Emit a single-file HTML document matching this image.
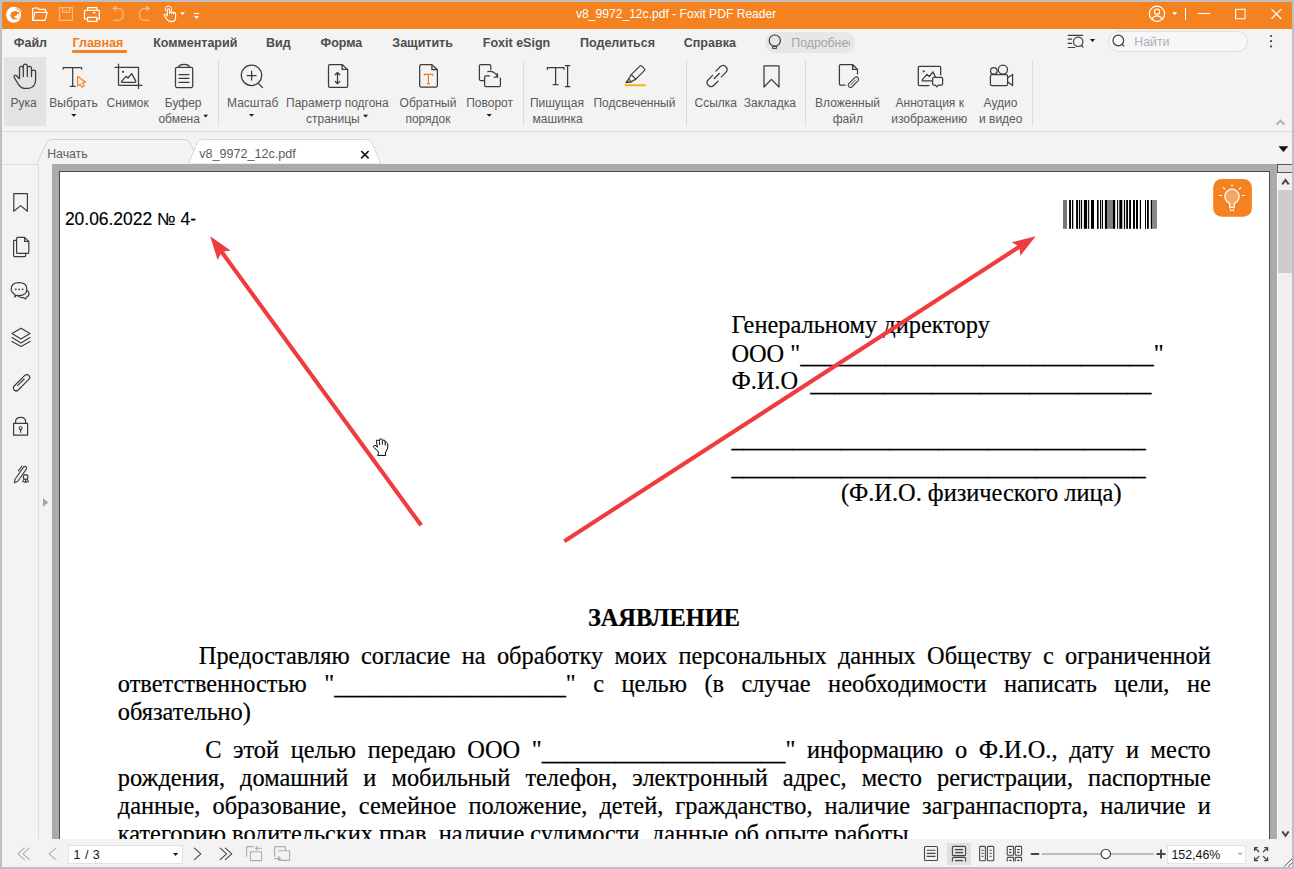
<!DOCTYPE html>
<html><head><meta charset="utf-8">
<style>
*{margin:0;padding:0;box-sizing:border-box}
html,body{width:1294px;height:869px;overflow:hidden;background:#bfbfbf;font-family:"Liberation Sans",sans-serif}
.a{position:absolute}
#title{left:2px;top:2px;width:1290px;height:27px;background:#f48221}
#menu{left:2px;top:29px;width:1290px;height:102px;background:#f3f3f3}
#ribline{left:2px;top:131px;width:1290px;height:1px;background:#dddddd}
#tabbar{left:2px;top:132px;width:1290px;height:32px;background:#f3f3f3}
#side{left:2px;top:164px;width:50px;height:675px;background:#f3f3f3}
#sideline{left:38px;top:164px;width:1px;height:675px;background:#dedede}
#docbg{left:52px;top:164px;width:1225px;height:675px;background:#ababab;overflow:hidden}
#page{left:7px;top:7px;width:1211px;height:700px;background:#fff;border:1px solid #4a4a4a;border-right-width:1px}
#vscroll{left:1277px;top:164px;width:15px;height:675px;background:#f0f0f0}
#status{left:2px;top:839px;width:1290px;height:28px;background:#f3f3f3}
.t{position:absolute;white-space:nowrap;line-height:1}
.mn{font-size:12.5px;font-weight:bold;color:#4d4d4d;top:37px}
.rb{font-size:12px;color:#5a5a5a;text-align:center}
.jl{white-space:normal;text-align:justify;text-align-last:justify}
.us{position:relative;top:1.8px}
.pdf{font-family:"Liberation Serif",serif;font-size:24.39px;color:#000;-webkit-text-stroke:0.2px #000}
</style></head><body>
<div id="title" class="a"></div>
<!-- TITLE -->
<svg class="a" style="left:0;top:0" width="1294" height="30" viewBox="0 0 1294 30">
<g fill="none" stroke="#fff" stroke-width="1.2" stroke-linejoin="round" stroke-linecap="round">
<!-- folder -->
<path d="M32.6 19.8 V9.2 Q32.6 8 33.8 8 H37.6 L39 9.4 H44.6 Q45.6 9.4 45.6 10.4 V12"/>
<path d="M32.8 20.3 L35 12.3 H47.2 L45 20.3 Z"/>
<!-- save (faded) -->
<g opacity="0.45"><path d="M59.6 7.6 H72.4 V20.4 H59.6 Z"/><path d="M62.6 7.6 V12.3 H69.6 V7.6"/><path d="M65.5 10.3 H66.8"/></g>
<!-- printer -->
<path d="M87.6 10.2 V7.6 H96.9 V10.2"/>
<path d="M87.4 19.2 H85.2 Q84.5 19.2 84.5 18.5 V11 Q84.5 10.3 85.2 10.3 H98.6 Q99.3 10.3 99.3 11 V18.5 Q99.3 19.2 98.6 19.2 H96.9"/>
<path d="M87.6 17.4 H96.9 V21.4 H87.6 Z"/>
<path d="M93.3 12.6 H95" stroke-width="1.3"/>
<!-- undo/redo faded -->
<g opacity="0.45">
<path d="M113.2 8.4 L116.3 6.6 M113.2 8.4 L116 10.5 M113.4 8.4 H117.5 Q123.2 8.5 123.2 14.4 Q123.2 20.4 117.2 20.4 H113.5"/>
<path d="M149.4 8.4 L146.3 6.6 M149.4 8.4 L146.6 10.5 M149.2 8.4 H145.1 Q139.4 8.5 139.4 14.4 Q139.4 20.4 145.4 20.4 H149.1"/>
</g>
<!-- touch hand -->
<path d="M167.3 15.6 V9.8 Q167.3 8.7 168.45 8.7 Q169.6 8.7 169.6 9.8 V13.2 M169.6 12.8 Q169.7 11.9 170.6 11.9 Q171.5 11.9 171.6 12.8 V13.6 M171.6 13 Q171.7 12.2 172.6 12.2 Q173.5 12.2 173.6 13.1 V13.8 M173.6 13.4 Q173.7 12.6 174.6 12.6 Q175.6 12.6 175.6 13.6 V18 Q175.6 21.6 171.2 21.6 Q168.4 21.6 166.8 19.4 L164.4 15.9 Q163.8 14.9 164.6 14.4 Q165.4 13.9 166.2 14.7 L167.3 15.8" stroke-width="1.1"/>
<path d="M165.3 10.6 Q165.1 6 168.45 6 Q171.8 6 171.6 10.6" stroke-width="1"/>
<!-- title right -->
<circle cx="1157" cy="13.8" r="7.6"/>
<circle cx="1157" cy="11.8" r="2.6"/>
<path d="M1152.1 19.4 Q1153.2 15.8 1157 15.8 Q1160.8 15.8 1161.9 19.4"/>
<path d="M1185.5 8.3 V19.6" stroke-width="1"/>
<path d="M1198 13.5 H1209.8" stroke-width="1.1"/>
<path d="M1235.6 9.3 H1245 V18.7 H1235.6 Z" stroke-width="1.1"/>
<path d="M1271.8 9.3 L1281 18.5 M1281 9.3 L1271.8 18.5" stroke-width="1.1"/>
</g>
<g fill="#fff">
<path d="M180 12.2 H185 L182.5 15 Z"/>
<path d="M1172 12.2 H1177.4 L1174.7 14.9 Z"/>
<rect x="194" y="12.9" width="5" height="1.2"/>
<path d="M194 15.9 H199 L196.5 19 Z"/>
<!-- foxit logo -->
<ellipse cx="13.6" cy="14.8" rx="7.5" ry="7.95"/>
<path d="M17.5 7.6 Q21.2 9.2 22 13 Q20.6 10.8 17.5 7.6 Z"/>
</g>
<ellipse cx="15.1" cy="15.3" rx="4.6" ry="4.3" fill="#f48221"/>
<path d="M19.7 13.4 L18.3 14.5 L17.4 13.6 L16.9 15.5 Q15.4 16.3 13.8 16.4 Q14.9 18.6 17.4 18.4 Q19.9 17.6 19.7 13.4 Z" fill="#fff"/>
<path d="M15.6 8.5 Q19.6 9.2 21.8 12.9" fill="none" stroke="#f48221" stroke-width="0.8"/>
</svg>
<div class="t" style="left:576px;top:8px;font-size:12.1px;color:#fff">v8_9972_12c.pdf - Foxit PDF Reader</div>
<!-- /TITLE -->
<div id="menu" class="a"></div>
<div id="ribline" class="a"></div>
<!-- RIBBON -->
<div class="a" style="left:4px;top:57px;width:42px;height:69px;background:#e3e3e3"></div>
<svg class="a" style="left:0;top:29px" width="1294" height="103" viewBox="0 29 1294 103">
<g fill="none" stroke="#3b3b3b" stroke-width="1.25" stroke-linejoin="round" stroke-linecap="round">
<!-- hand -->
<path d="M19.3 78.6 L16.6 75.8 Q15 74.6 14.2 76 Q13.8 76.9 14.5 78 L18.8 84.8 Q21 88.2 24.4 88.4 H28.2 Q32.4 88.2 34.4 84.8 Q35.6 82.6 35.6 79.6 V71.8 Q35.6 70 33.6 70 Q31.6 70 31.5 71.8 V76.6 M31.5 76.6 V68.2 Q31.5 66.3 29.4 66.3 Q27.4 66.3 27.3 68.2 V76.4 M27.3 76.4 V66.2 Q27.3 64.2 25.3 64.2 Q23.3 64.2 23.3 66.2 V76.4 M23.3 76.6 V68.2 Q23.3 66.3 21.4 66.3 Q19.5 66.3 19.5 68.2 V78.6"/>
<!-- T select -->
<path d="M63.2 69.1 V67.7 H81.6 V69.1 M72.7 67.7 V86.3 M70.2 86.3 H75.1"/>
<!-- snapshot -->
<path d="M115 67.3 H138.5 V88.4 M118.5 64 V84.4 Q118.5 85.4 119.5 85.4 H141.8"/>
<path d="M121.6 81.4 L126 76.3 L128 78 L131.6 73.6 L135.6 80.6 Q136 82.3 134.6 82.3 H122.4 Q120.9 82.3 121.6 81.4 Z"/>
<!-- clipboard -->
<path d="M177 67.3 H191.2 Q192.7 67.3 192.7 68.8 V86 Q192.7 87.5 191.2 87.5 H177 Q175.5 87.5 175.5 86 V68.8 Q175.5 67.3 177 67.3 Z"/>
<path d="M178.4 67.3 Q179.2 64.3 184.1 64.3 Q189 64.3 189.8 67.3"/>
<path d="M179 74.5 H188.9 M179 78.4 H188.9 M179 82.4 H188.9"/>
<!-- zoom -->
<circle cx="251.5" cy="75.3" r="10.2"/>
<path d="M247.1 75.5 H256.1 M251.6 71.1 V80 M258.8 83.7 L262.6 87.6"/>
<!-- fit page -->
<path d="M342.1 64.5 H329.9 Q328.5 64.5 328.5 65.9 V86 Q328.5 87.4 329.9 87.4 H346.3 Q347.7 87.4 347.7 86 V69.6 Z M342.1 64.5 V69.4 H347.7"/>
<path d="M337.5 72.6 V83.6 M335.2 74.8 L337.5 72.5 L339.8 74.8 M335.2 81.4 L337.5 83.7 L339.8 81.4"/>
<!-- reverse doc -->
<path d="M431.9 64.6 H421.1 Q419.7 64.6 419.7 66 V85.6 Q419.7 87 421.1 87 H436 Q437.4 87 437.4 85.6 V69.7 Z M431.9 64.6 V69.6 H437.4"/>
<!-- rotate -->
<path d="M484.2 80.5 H480.6 Q479.4 80.5 479.4 79.3 V65.8 Q479.4 64.6 480.6 64.6 H489.6 Q490.8 64.6 490.8 65.8 V69.7"/>
<path d="M489.6 75.8 H485.8 Q484.6 75.8 484.6 77 V85.5 Q484.6 86.7 485.8 86.7 H499.2 Q500.4 86.7 500.4 85.5 V78.2"/>
<path d="M487.8 71.6 Q494.6 70.6 497.6 76.8 M497.7 77 L497.3 73.6 M497.7 77 L494.2 77.2"/>
<!-- typewriter -->
<path d="M547.4 69.3 V67.7 H564 V69.3 M555.6 67.7 V84.7 M553.2 84.7 H558 M567.6 65.5 V86.5 M565.3 65.5 H569.9 M565.3 86.5 H569.9"/>
<!-- highlighter -->
<path d="M631.3 74.6 L639.8 66.1 Q640.8 65.1 641.8 66.1 L644.3 68.6 Q645.3 69.6 644.3 70.6 L635.8 79.1 Z"/>
<path d="M631.3 74.6 L628.6 79 L631.4 81.8 L635.8 79.1"/>
<path d="M628.6 79 L626 82.6 L631.4 81.8" fill="#e0a020"/>
<!-- link -->
<path d="M715.9 71.1 L720.2 66.8 Q723 64 725.8 66.8 Q728.6 69.6 725.8 72.4 L721.3 76.9"/>
<path d="M712.6 75.4 L708.3 79.7 Q705.5 82.5 708.3 85.3 Q711.1 88.1 713.9 85.3 L718 81.2"/>
<path d="M714.3 78.5 L719.3 73.5"/>
<!-- bookmark -->
<path d="M764 65.8 H779 V87 L771.4 79.4 L764 87 Z"/>
<!-- attachment doc -->
<path d="M845 85.2 H840.6 Q839.4 85.2 839.4 84 V65.7 Q839.4 64.5 840.6 64.5 H852.6 L857.5 69.4 V73.9 M852.6 64.5 V69.4 H857.5"/>
<path d="M848.6 83.8 L855 77.4 A2.3 2.3 0 0 1 858.2 80.6 L851.8 87 A2.3 2.3 0 0 1 848.6 83.8 Z" stroke-width="1.1"/>
<path d="M850.8 84.8 L856 79.6" stroke-width="0.9"/>
<!-- image annotation -->
<path d="M929 85.5 H919.5 Q918.3 85.5 918.3 84.3 V67.5 Q918.3 66.3 919.5 66.3 H939.5 Q940.7 66.3 940.7 67.5 V74.8"/>
<path d="M931.8 80.9 H923.3 Q921.6 80.9 922.4 79.6 L927 74.4 L929.4 76.5 L932.9 71.9 L935.3 76.6"/>
<path d="M933.8 77.4 H941.4 Q942.6 77.4 942.6 78.6 V84 Q942.6 85.2 941.4 85.2 H938.2 L936.8 86.8 L935.4 85.2 H933.8 Q932.6 85.2 932.6 84 V78.6 Q932.6 77.4 933.8 77.4 Z"/>
<!-- camera -->
<path d="M992 74.6 H1006 Q1007.6 74.6 1007.6 76.2 V83.9 Q1007.6 85.5 1006 85.5 H992 Q990.4 85.5 990.4 83.9 V76.2 Q990.4 74.6 992 74.6 Z"/>
<circle cx="993.8" cy="70.8" r="3.3"/>
<circle cx="1002.9" cy="69.6" r="4.6"/>
<path d="M1007.6 77.8 L1012.6 74.4 V85.5 L1007.6 82"/>
</g>
<g fill="#3b3b3b">
<circle cx="122.9" cy="71.8" r="1.1"/>
<circle cx="923.7" cy="71.3" r="1.1"/>
</g>
<!-- orange bits -->
<path d="M77.5 76.3 L85.8 82.2 L82.6 82.8 L84.3 85.7 L82 87.3 L80.2 84.3 L77.5 86 Z" fill="#fde9dc" stroke="#f4822a" stroke-width="1.1" stroke-linejoin="round"/>
<path d="M424.3 75.8 V74.3 H432.6 V75.8 M428.4 74.3 V83.6 M426.9 83.6 H430" fill="none" stroke="#f07b1e" stroke-width="1.2"/>
<path d="M625.6 85.3 H644.8" stroke="#f7b21b" stroke-width="2.1" stroke-linecap="round"/>
<!-- dropdown arrows -->
<g fill="#1a1a1a">
<path d="M71.2 114 H76.4 L73.8 116.8 Z"/>
<path d="M203.3 114.8 H208.1 L205.7 117.5 Z"/>
<path d="M249.1 114 H254 L251.5 116.8 Z"/>
<path d="M363 114.8 H368.2 L365.6 117.5 Z"/>
<path d="M486.6 114 H491.9 L489.2 116.8 Z"/>
</g>
<!-- separators -->
<g fill="#dcdcdc">
<rect x="218" y="60" width="1" height="66"/>
<rect x="523" y="60" width="1" height="66"/>
<rect x="686" y="60" width="1" height="66"/>
<rect x="805" y="60" width="1" height="66"/>
<rect x="1032" y="60" width="1" height="66"/>
</g>
<path d="M1276.6 124.6 L1280.5 120.4 L1284.4 124.6" fill="none" stroke="#a8a8a8" stroke-width="1.6"/>
</svg>
<!-- ribbon labels -->
<div class="t rb" style="left:10.6px;top:97px">Рука</div>
<div class="t rb" style="left:49.3px;top:97px">Выбрать</div>
<div class="t rb" style="left:106.6px;top:97px">Снимок</div>
<div class="t rb" style="left:164.8px;top:97px">Буфер</div>
<div class="t rb" style="left:158.4px;top:113px">обмена</div>
<div class="t rb" style="left:227px;top:97px">Масштаб</div>
<div class="t rb" style="left:286.0px;top:97px">Параметр подгона</div>
<div class="t rb" style="left:306px;top:113px">страницы</div>
<div class="t rb" style="left:399.6px;top:97px">Обратный</div>
<div class="t rb" style="left:405.4px;top:113px">порядок</div>
<div class="t rb" style="left:466.2px;top:97px">Поворот</div>
<div class="t rb" style="left:529.9px;top:97px">Пишущая</div>
<div class="t rb" style="left:532.6px;top:113px">машинка</div>
<div class="t rb" style="left:593.4px;top:97px">Подсвеченный</div>
<div class="t rb" style="left:694.5px;top:97px">Ссылка</div>
<div class="t rb" style="left:743.8px;top:97px">Закладка</div>
<div class="t rb" style="left:815.1px;top:97px">Вложенный</div>
<div class="t rb" style="left:832.7px;top:113px">файл</div>
<div class="t rb" style="left:895.6px;top:97px">Аннотация к</div>
<div class="t rb" style="left:891.2px;top:113px">изображению</div>
<div class="t rb" style="left:983.6px;top:97px">Аудио</div>
<div class="t rb" style="left:979.0px;top:113px">и видео</div>
<!-- /RIBBON -->
<div id="tabbar" class="a"></div>
<!-- TABS -->
<svg class="a" style="left:0;top:132px" width="1294" height="32" viewBox="0 132 1294 32">
<path d="M37 163.5 L46.7 142.6 Q48.5 139.5 52.5 139.5 H184.2 Q188.2 139.5 190 143 L195 153" fill="#f3f3f3" stroke="#d2d2d2" stroke-width="1"/>
<path d="M188.4 164 L197 143.2 Q198.8 139.5 202.8 139.5 H366.4 Q370.4 139.5 372.2 143.2 L380.8 164 Z" fill="#ffffff" stroke="#d6d6d6" stroke-width="1"/>
<path d="M361.2 151 L368.6 158.4 M368.6 151 L361.2 158.4" stroke="#111" stroke-width="1.6"/>
<path d="M1278.5 146.2 H1288.3 L1283.4 152.1 Z" fill="#111"/>
</svg>
<div class="t" style="left:47.2px;top:147.6px;font-size:12.3px;color:#5c5c5c">Начать</div>
<div class="t" style="left:199.2px;top:147.5px;font-size:12.6px;color:#5c5c5c">v8_9972_12c.pdf</div>
<!-- /TABS -->
<div id="side" class="a"></div>
<div id="sideline" class="a"></div>
<!-- SIDE -->
<div class="a" style="left:2px;top:164px;width:36px;height:1px;background:#e0e0e0"></div>
<svg class="a" style="left:0;top:164px" width="52" height="675" viewBox="0 164 52 675">
<g fill="none" stroke="#3d3d3d" stroke-width="1.2" stroke-linejoin="round" stroke-linecap="round">
<path d="M13.8 193.6 H27.4 V211.2 L20.6 205.6 L13.8 211.2 Z"/>
<path d="M24.6 237.4 H17.6 Q16.6 237.4 16.6 238.4 V252.4 Q16.6 253.4 17.6 253.4 H27.8 Q28.8 253.4 28.8 252.4 V241.4 Z M24.6 237.4 V241.4 H28.8"/>
<path d="M16.6 240.4 H14.4 Q13.6 240.4 13.6 241.2 V255.8 Q13.6 256.6 14.4 256.6 H24.8 Q25.6 256.6 25.6 255.8 V253.4"/>
<path d="M15 294.6 Q11.2 292.6 11.2 289.1 Q11.2 282.6 19 282.6 Q26.8 282.6 26.8 289.1 Q26.8 295.6 19 295.6 Q17.6 295.6 16.6 295.3 L14.8 297 Z"/>
<path d="M27 290.6 Q29 291.8 29 293.8 Q29 296.2 26.4 297.2 L25.6 299 L23.4 297.6 Q20 297.8 18.2 296.4"/>
<path d="M12 333.6 L21 328.2 L30 333.6 L21 339 Z"/>
<path d="M12 337.6 L21 343 L30 337.6 M12 341.4 L21 346.4 L30 341.4"/>
<path d="M14.2 386 L24.8 375.4 A2.8 2.8 0 0 1 28.8 379.4 L18.2 390 A2.8 2.8 0 0 1 14.2 386 Z"/>
<path d="M17.6 385.6 L24.2 379" stroke-width="1.1"/>
<path d="M15.6 423.4 V421.6 Q15.6 417.4 20.6 417.4 Q25.6 417.4 25.6 421.6 V423.4"/>
<path d="M13.6 423.4 H27.6 V435.2 H13.6 Z"/>
<path d="M20.6 429.6 V432.2"/>
<circle cx="20.6" cy="428.2" r="1.4" stroke-width="1.1"/>
<path d="M14.4 482.8 L15 479.2 L23.2 467.6 Q24.6 465.8 26 466.8 Q27.3 467.8 26 469.6 L17.8 481.2 Z" stroke-width="1.1"/>
<path d="M18.4 470.8 L22 466" stroke-width="1.1"/>
<circle cx="25.6" cy="477" r="2.4" stroke-width="1.1"/>
<path d="M23.9 479 L22.6 481.9 L24.2 481.5 L25 482.8 L25.7 479.6 M27.3 479 L28.6 481.9 L27 481.5 L26.2 482.8 L25.5 479.6" stroke-width="1"/>
</g>
<g fill="#3d3d3d"><circle cx="15.8" cy="289.3" r="0.9"/><circle cx="19.2" cy="289.3" r="0.9"/><circle cx="22.6" cy="289.3" r="0.9"/></g>
<path d="M43 498.2 L48.2 502.5 L43 506.8 Z" fill="#a3a3a3"/>
</svg>
<!-- /SIDE -->
<div id="docbg" class="a"><div id="page" class="a"></div></div>
<!-- PDF -->
<div class="t" style="left:64.9px;top:211.4px;font-size:17.45px;color:#000;-webkit-text-stroke:0.15px #000">20.06.2022 № 4-</div>
<div class="t pdf" style="left:731.4px;top:313.47px;">Генеральному директору</div>
<div class="t pdf" style="left:731.4px;top:341.67px;">ООО "<span class="us">_____________________________</span>"</div>
<div class="t pdf" style="left:731.4px;top:369.07px;">Ф.И.О&nbsp;&nbsp;<span class="us">____________________________</span></div>
<div class="t pdf" style="left:731.4px;top:424.97px;"><span class="us">__________________________________</span></div>
<div class="t pdf" style="left:731.4px;top:453.37px;"><span class="us">__________________________________</span></div>
<div class="t pdf" style="left:840.9px;top:480.97px;">(Ф.И.О. физического лица)</div>
<div class="t pdf" style="left:587.9px;top:605.87px;font-weight:bold">ЗАЯВЛЕНИЕ</div>
<div class="t pdf jl" style="left:198.8px;top:643.97px;width:1012.0px">Предоставляю согласие на обработку моих персональных данных Обществу с ограниченной</div>
<div class="t pdf jl" style="left:117.8px;top:672.17px;width:1093.0px">ответственностью "<span class="us">___________________</span>" с целью (в случае необходимости написать цели, не</div>
<div class="t pdf" style="left:117.8px;top:699.97px;">обязательно)</div>
<div class="t pdf jl" style="left:205.2px;top:737.87px;width:1005.6px">С этой целью передаю ООО "<span class="us">____________________</span>" информацию о Ф.И.О., дату и место</div>
<div class="t pdf jl" style="left:117.8px;top:765.67px;width:1093.0px">рождения, домашний и мобильный телефон, электронный адрес, место регистрации, паспортные</div>
<div class="t pdf jl" style="left:117.8px;top:793.67px;width:1093.0px">данные, образование, семейное положение, детей, гражданство, наличие загранпаспорта, наличие и</div>
<div class="t pdf" style="left:117.8px;top:821.67px;">категорию водительских прав, наличие судимости, данные об опыте работы.</div>
<svg class="a" style="left:0;top:0" width="1294" height="869" viewBox="0 0 1294 869"><rect x="1063" y="200" width="4" height="28.8" fill="#777"/><rect x="1069.1" y="200" width="1.9" height="28.8" fill="#000"/><rect x="1072" y="200" width="1.3" height="28.8" fill="#000"/><rect x="1076.1" y="200" width="2.0" height="28.8" fill="#000"/><rect x="1079" y="200" width="1.1" height="28.8" fill="#000"/><rect x="1080.9" y="200" width="1.2" height="28.8" fill="#000"/><rect x="1083.9" y="200" width="3.2" height="28.8" fill="#000"/><rect x="1088.1" y="200" width="1.1" height="28.8" fill="#000"/><rect x="1091" y="200" width="3" height="28.8" fill="#000"/><rect x="1097" y="200" width="1.6" height="28.8" fill="#000"/><rect x="1100" y="200" width="1" height="28.8" fill="#000"/><rect x="1101.8" y="200" width="1.2" height="28.8" fill="#000"/><rect x="1104.9" y="200" width="2.1" height="28.8" fill="#000"/><rect x="1107" y="200" width="6" height="28.8" fill="#808080"/><rect x="1113" y="200" width="2.2" height="28.8" fill="#000"/><rect x="1117.1" y="200" width="1.0" height="28.8" fill="#000"/><rect x="1119.3" y="200" width="3.0" height="28.8" fill="#000"/><rect x="1123.9" y="200" width="1.2" height="28.8" fill="#000"/><rect x="1126.2" y="200" width="1.8" height="28.8" fill="#000"/><rect x="1129.1" y="200" width="1.9" height="28.8" fill="#000"/><rect x="1133" y="200" width="2" height="28.8" fill="#000"/><rect x="1136" y="200" width="2" height="28.8" fill="#000"/><rect x="1139.8" y="200" width="1.2" height="28.8" fill="#000"/><rect x="1145" y="200" width="1" height="28.8" fill="#000"/><rect x="1147" y="200" width="1.8" height="28.8" fill="#000"/><rect x="1150.8" y="200" width="1.7" height="28.8" fill="#000"/><rect x="1152.5" y="200" width="4.5" height="28.8" fill="#888"/><rect x="1213.2" y="179" width="38.7" height="37.8" rx="8.5" fill="#f48221"/>
<circle cx="1232" cy="196.4" r="7.2" fill="#f6a564" stroke="#fff" stroke-width="1.2"/>
<path d="M1229.6 203 L1229.8 207.5 L1234.2 207.5 L1234.4 203" fill="#f6a564" stroke="#fff" stroke-width="1.1"/>
<path d="M1230.3 208.5 L1230.6 210.6 L1233.4 210.6 L1233.7 208.5" fill="none" stroke="#fff" stroke-width="1"/>
<g stroke="#fff" stroke-width="1.1" stroke-linecap="round" fill="none" opacity="0.9"><path d="M1232 184.3V186.2M1223.3 187.4L1224.8 189M1240.8 187.4L1239.3 189M1219.3 195.5H1221.6M1242.4 195.5H1244.7"/></g><polygon fill="#f03b3f" points="210.20,236.20 230.51,250.47 223.94,251.55 422.76,524.09 419.44,526.51 220.63,253.97 217.59,259.90"/><polygon fill="#f03b3f" points="1035.70,236.20 1020.32,255.68 1019.60,249.06 565.41,542.92 563.19,539.48 1017.37,245.61 1011.62,242.25"/><path d="M377.6 455.4 L378.4 453.5 L378.2 451.4 L373.5 447.2 L373.3 446.3 L374.6 445.4 L376.1 445.6 L377.4 447.3 L376.5 441.4 L376.4 440.3 L378.2 440.2 L379.5 441 L379.7 439.2 L381.6 439 L382.8 440.2 L384.6 440.2 L385.3 441.6 L386.2 442 L387.6 443.4 L387.8 446.8 L387.3 449 L386.3 451 L385.3 453 L385.8 455.4 Z" fill="#fff" stroke="#000" stroke-width="1"/>
<path d="M379.4 441.5 L379.8 445 M382.3 440.3 L382.4 444.5 M385 441.4 L385.3 445.5" stroke="#000" stroke-width="1" fill="none"/></svg>
<!-- /PDF -->
<div id="vscroll" class="a"></div>
<!-- VSCROLL -->
<svg class="a" style="left:1277px;top:164px" width="15" height="675" viewBox="1277 164 15 675">
<rect x="1277" y="164" width="15" height="675" fill="#f0f0f0"/>
<rect x="1277" y="164" width="1" height="675" fill="#fafafa"/>
<rect x="1277.5" y="164.5" width="15" height="8" fill="#dedede" stroke="#555" stroke-width="1"/>
<rect x="1278" y="190" width="14" height="83" fill="#cdcdcd"/>
<path d="M1282.3 184.4 L1285.5 180 L1288.7 184.4" fill="none" stroke="#4a4a4a" stroke-width="2"/>
<path d="M1282.3 831.4 L1285.5 835.8 L1288.7 831.4" fill="none" stroke="#4a4a4a" stroke-width="2"/>
</svg>
<!-- /VSCROLL -->
<div id="status" class="a"></div>
<!-- STATUS -->
<div class="a" style="left:68px;top:844.5px;width:115px;height:19px;background:#fff;border:1px solid #e2e2e2"></div>
<div class="a" style="left:1166.5px;top:844.5px;width:79px;height:19px;background:#fff;border:1px solid #e2e2e2"></div>
<div class="a" style="left:947px;top:843px;width:24px;height:21.5px;background:#e0e0e0"></div>
<div class="t" style="left:73.6px;top:848.9px;font-size:12.4px;color:#111;letter-spacing:0.5px">1 / 3</div>
<div class="t" style="left:1171.4px;top:848.9px;font-size:12.4px;color:#111;letter-spacing:0px">152,46%</div>
<svg class="a" style="left:0;top:839px" width="1294" height="30" viewBox="0 839 1294 30">
<g fill="none" stroke-width="1.1" stroke-linecap="round" stroke-linejoin="round">
<g stroke="#adadad">
<path d="M24.3 848.1 L18 853.9 L24.3 859.7 M29.3 848.1 L23 853.9 L29.3 859.7"/>
<path d="M56 848.1 L49 853.9 L56 859.7"/>
<path d="M253.4 846.6 H246.6 V856.2 M250.4 851.8 H261.6 V860.6 H250.4 Z M255.6 848.2 H261.6 M257.4 846.4 L255.6 848.2 L257.4 850"/>
<path d="M274.6 856.2 V846.6 H285.4 V850.8 M278.6 850.8 H289.6 V860.4 H278.6 V856.2 M274.6 858.6 H280.4 M278.6 856.8 L280.4 858.6 L278.6 860.4"/>
<path d="M1237.4 852.8 H1242.9 L1240.15 855.3 Z" fill="#acacac" stroke="none"/>
</g>
<g stroke="#474747">
<path d="M194.4 848.1 L200.8 853.9 L194.4 859.7"/>
<path d="M220.2 848.1 L226.6 853.9 L220.2 859.7 M225.4 848.1 L231.8 853.9 L225.4 859.7"/>
<rect x="924.5" y="846.5" width="13" height="14" rx="1"/>
<path d="M927.2 850.3 H935 M927.2 853.4 H935 M927.2 856.4 H935"/>
<rect x="952.4" y="846.4" width="13.2" height="9.2" rx="1"/>
<path d="M955.4 849.6 H962.6 M955.4 852.6 H962.6 M952.4 861 V858.4 Q952.4 857.4 953.4 857.4 H964.6 Q965.6 857.4 965.6 858.4 V861 M955.4 860.6 H962.6"/>
<rect x="979.6" y="846.4" width="5.8" height="14.4" rx="1"/>
<rect x="987.4" y="846.4" width="6.4" height="14.4" rx="1"/>
<path d="M981.9 850.2 H983.3 M981.9 853.3 H983.3 M981.9 856.3 H983.3 M989.9 850.2 H991.3 M989.9 853.3 H991.3 M989.9 856.3 H991.3"/>
<rect x="1007.2" y="846.4" width="6.4" height="8.8" rx="1"/>
<rect x="1015.2" y="846.4" width="6.4" height="8.8" rx="1"/>
<path d="M1009.6 849.6 H1011.2 M1009.6 852.4 H1011.2 M1017.6 849.6 H1019.2 M1017.6 852.4 H1019.2 M1007.2 861 V858.2 Q1007.2 857.4 1008 857.4 H1012.8 Q1013.6 857.4 1013.6 858.2 V861 M1015.2 861 V858.2 Q1015.2 857.4 1016 857.4 H1020.8 Q1021.6 857.4 1021.6 858.2 V861 M1009.6 860.4 H1011.2 M1017.6 860.4 H1019.2"/>
<path d="M1031.6 853.9 H1038.4" stroke-width="2"/>
<path d="M1157.2 854 H1164.8 M1161 850.2 V857.8" stroke-width="2"/>
<path d="M1254.6 847.6 L1258.8 851.8 M1254.6 847.6 H1257.6 M1254.6 847.6 V850.6 M1267.6 847.6 L1263.4 851.8 M1267.6 847.6 H1264.6 M1267.6 847.6 V850.6 M1254.6 860.6 L1258.8 856.4 M1254.6 860.6 H1257.6 M1254.6 860.6 V857.6 M1267.6 860.6 L1263.4 856.4 M1267.6 860.6 H1264.6 M1267.6 860.6 V857.6" stroke-width="1.3"/>
<path d="M1284.4 866.4 L1292 858.8 M1288.6 866.4 L1292 863" stroke="#555" stroke-width="1"/>
</g>
<path d="M173 853 H178.2 L175.6 856 Z" fill="#1a1a1a"/>
</g>
<path d="M1042 853.9 H1153.8" stroke="#bcbcbc" stroke-width="2"/>
<circle cx="1105.8" cy="853.9" r="4.7" fill="#fff" stroke="#3a3a3a" stroke-width="1.1"/>
</svg>
<!-- /STATUS -->

<!-- menu texts -->
<div class="t mn" style="left:13.8px">Файл</div>
<div class="t mn" style="left:72.5px;color:#f07d1a">Главная</div>
<div class="a" style="left:72px;top:50px;width:55px;height:3px;background:#f48221;border-radius:1px"></div>
<div class="t mn" style="left:153.2px">Комментарий</div>
<div class="t mn" style="left:266.0px">Вид</div>
<div class="t mn" style="left:320.5px">Форма</div>
<div class="t mn" style="left:392.3px">Защитить</div>
<div class="t mn" style="left:482.8px">Foxit eSign</div>
<div class="t mn" style="left:580.0px">Поделиться</div>
<div class="t mn" style="left:683.8px">Справка</div>
<!-- MENURIGHT -->
<div class="a" style="left:765px;top:32px;width:90px;height:21px;border-radius:10.5px;background:#e7e7e7"></div>
<div class="t" style="left:791.3px;top:36.5px;font-size:12.3px;color:#a3a3a3;width:59px;overflow:hidden">Подробнее</div>
<div class="a" style="left:1108px;top:30.5px;width:140px;height:21.5px;border-radius:11px;background:#f7f7f7;border:1px solid #dedede"></div>
<div class="t" style="left:1134.3px;top:36px;font-size:12.3px;color:#a9afba">Найти</div>
<svg class="a" style="left:0;top:29px" width="1294" height="28" viewBox="0 29 1294 28">
<g fill="none" stroke="#3d3d3d" stroke-width="1.2" stroke-linecap="round">
<circle cx="774.8" cy="40.6" r="5.6"/>
<path d="M772.9 46.5 H776.7 V48.4 H772.9 Z" stroke-width="1"/>
<path d="M1068.2 35.3 H1082.7 M1068.2 39.2 H1071.6 M1068.2 43.3 H1071.6 M1068.2 47.5 H1074.8"/>
<circle cx="1078.2" cy="41.8" r="4.7"/>
<path d="M1081.5 45.3 L1083 47"/>
<circle cx="1118.3" cy="40.5" r="5.3"/>
<path d="M1122.1 44.3 L1124 46.2"/>
</g>
<path d="M1089.9 38.9 H1095.1 L1092.5 41.9 Z" fill="#1a1a1a"/>
<g fill="#444"><circle cx="1271" cy="36" r="1.1"/><circle cx="1271" cy="41.2" r="1.1"/><circle cx="1271" cy="46.4" r="1.1"/></g>
</svg>
<!-- /MENURIGHT -->

</body></html>
